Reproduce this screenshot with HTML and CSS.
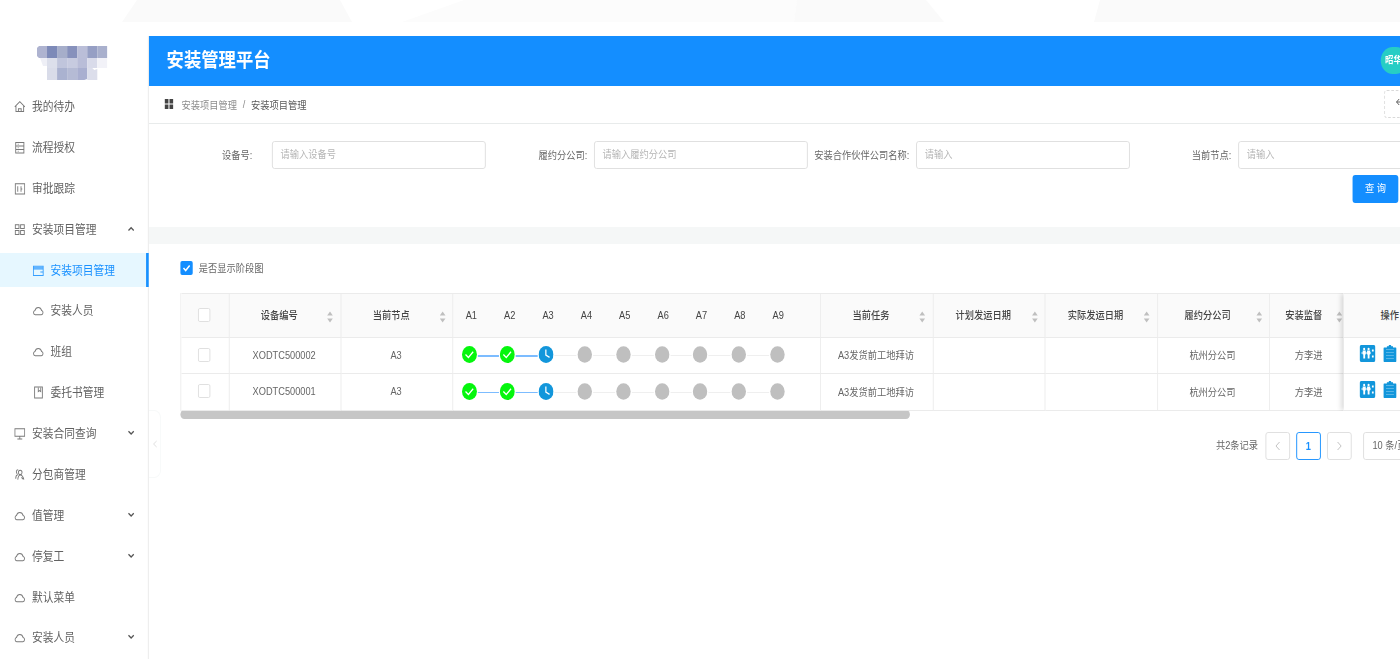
FILE: index.html
```html
<!DOCTYPE html>
<html lang="zh-CN">
<head>
<meta charset="utf-8">
<title>安装管理平台</title>
<link rel="stylesheet" href="styles.css">
</head>
<body>
<svg class="backdrop" width="1400" height="22" viewBox="0 0 1400 22">
  <path fill="#fafafa" d="M137 0H340L352 22H122z"/>
  <path fill="#fcfcfc" d="M464 0H797L794 22H402z"/>
  <path fill="#fafafa" d="M797 0H926L944 22H794z"/>
  <path fill="#fafafa" d="M1100 0H1400V22H1094z"/>
</svg>
<svg class="defs" width="0" height="0">
  <symbol id="cloud" viewBox="0 0 14 14"><path d="M3.200 11.500a2.300 2.300 0 0 1-.3-4.500C3.500 5 5 3.800 7 3.800S10.500 5 11.100 7a2.300 2.300 0 0 1-.3 4.500z"/></symbol>
  <symbol id="home" viewBox="0 0 14 14"><path d="M.8 7.500 7 1.800l6.200 5.700M2.300 6.500v6h9.400v-6M5.300 12.500V9.500h3.400v3"/></symbol>
  <symbol id="doc" viewBox="0 0 14 14"><path d="M2 1.500h10v11.500H2zM2 5.300h10M2 9.200h10M4.500 3.400h1M4.500 7.200h1M4.500 11h1"/></symbol>
  <symbol id="audit" viewBox="0 0 14 14"><path d="M1.500 2h11.500v11H1.500zM4.500 4.500v6M8.500 4.500v6M8.500 7.500h1.500"/></symbol>
  <symbol id="grid" viewBox="0 0 14 14"><path d="M1.500 2H6v4H1.500zM8 2h4.500v4H8zM1.500 8H6v4.500H1.500zM8 8h4.500v4.500H8z"/></symbol>
  <symbol id="window" viewBox="0 0 14 14"><path d="M1 2.500h12v10H1zM1 4h12M1 5.500h12M9.500 8.500H13"/></symbol>
  <symbol id="book" viewBox="0 0 14 14"><path d="M2.500 1h9.500v12H2.500zM7 2v4l1.500-1L10 6V2"/></symbol>
  <symbol id="screen" viewBox="0 0 14 14"><path d="M1 2h12v8H1zM4 12.800h6M7 10v2.500"/></symbol>
  <symbol id="people" viewBox="0 0 14 14"><path d="M5 2a2.200 2.200 0 0 0-1 4.200M2 11.500C2 9 3 7.500 4.500 7M7.500 2.500a2.200 2.200 0 1 1 0 4.500 2.200 2.200 0 0 1 0-4.500zM4.500 12.500C5 9 6 7.500 7.500 7.500S11 9 12 12.500M9 10l2 2"/></symbol>
  <symbol id="down" viewBox="0 0 8 6"><path d="M1 1.200 4 4l3-2.800"/></symbol>
  <symbol id="up" viewBox="0 0 8 6"><path d="M1 4.500 4 1.700l3 2.800"/></symbol>
  <symbol id="sort" viewBox="0 0 8 12"><path fill="#bfbfbf" d="M4 .5 7.200 4.500H.8zM4 11.500 7.200 7.500H.8z"/></symbol>
  <symbol id="done" viewBox="0 0 17 17"><circle cx="8.500" cy="8.500" r="8.500" fill="#05f60d"/><path d="m4 8.500 3.300 3 5.400-5.700" fill="none" stroke="#fff" stroke-width="1.500"/></symbol>
  <symbol id="clock" viewBox="0 0 17 17"><circle cx="8.500" cy="8.500" r="8.500" fill="#1296db"/><path d="M8.300 3.500v5.700l4.200 2.200" fill="none" stroke="#fff" stroke-width="1.400"/></symbol>
  <symbol id="todo" viewBox="0 0 17 17"><circle cx="8.500" cy="8.500" r="8.200" fill="#bfbfbf"/></symbol>
  <symbol id="team" viewBox="0 0 18 17"><rect width="18" height="17" rx="2" fill="#1296db"/><path fill="#fff" d="M3.500 5.500h3.500v4H6.300v4H4.200v-4h-.7zM8.500 5.500H12v4h-.7v4H9.200v-4h-.7zM2 7.500h11v1H2zM14 4.500h2v2h-2zM14 10.500h2v2h-2z"/><circle cx="5.200" cy="4" r="1.200" fill="#fff"/><circle cx="10.200" cy="4" r="1.200" fill="#fff"/></symbol>
  <symbol id="clip" viewBox="0 0 15 17"><path fill="#1296db" d="M1 2.500h3V1.300h2A1.500 1.500 0 0 1 9 1.300h2v1.200h3a1 1 0 0 1 1 1V16a1 1 0 0 1-1 1H1a1 1 0 0 1-1-1V3.500a1 1 0 0 1 1-1z"/><path d="M3 4.500h9M3 7.500h9M3 10.500h9M3 13.500h9" stroke="#6fbfea" stroke-width=".8"/></symbol>
</svg>
<div class="app">
  <aside class="side">
    <div class="logo">
      <svg width="80" height="34" viewBox="0 0 70 34" preserveAspectRatio="none">
        <path fill="#aeb3d0" d="M2 0h8v12H2L0 10V2z"/><path fill="#7d8ab8" d="M10 0h10v12H10z"/><path fill="#a6aeca" d="M20 0h10v12H20z"/><path fill="#8791bc" d="M30 0h10v12H30z"/><path fill="#babed8" d="M40 0h10v12H40z"/><path fill="#969fc4" d="M50 0h10v12H50z"/><path fill="#a9b0cd" d="M60 0h10v12H60z"/>
        <path fill="#eeeff6" d="M3 12h7v8H6z"/><path fill="#dcdfeb" d="M10 12h10v10H10z"/><path fill="#c0c5dc" d="M20 12h10v10H20z"/><path fill="#c7cbe0" d="M30 12h10v10H30z"/><path fill="#b9bdd8" d="M40 12h10v10H40z"/><path fill="#d9dbea" d="M50 12h10v10H50z"/><path fill="#f2f2f8" d="M60 12h10v10H60z"/>
        <path fill="#d9dce9" d="M10 22h10v12H10z"/><path fill="#aab2d0" d="M20 22h10v12H20z"/><path fill="#b5bbd5" d="M30 22h10v12H30z"/><path fill="#a9afd0" d="M40 22h10v11l-3 1h-7z"/><path fill="#dcdeeb" d="M50 22h5l2 2 3-1v11H50z"/>
      </svg>
    </div>
    <nav class="menu">
      <div class="item"><svg class="ico"><use href="#home"/></svg><span>我的待办</span></div>
      <div class="item"><svg class="ico"><use href="#doc"/></svg><span>流程授权</span></div>
      <div class="item"><svg class="ico"><use href="#audit"/></svg><span>审批跟踪</span></div>
      <div class="item"><svg class="ico"><use href="#grid"/></svg><span>安装项目管理</span><svg class="arrow"><use href="#up"/></svg></div>
      <div class="item sub active"><svg class="ico"><use href="#window"/></svg><span>安装项目管理</span></div>
      <div class="item sub"><svg class="ico"><use href="#cloud"/></svg><span>安装人员</span></div>
      <div class="item sub"><svg class="ico"><use href="#cloud"/></svg><span>班组</span></div>
      <div class="item sub"><svg class="ico"><use href="#book"/></svg><span>委托书管理</span></div>
      <div class="item"><svg class="ico"><use href="#screen"/></svg><span>安装合同查询</span><svg class="arrow"><use href="#down"/></svg></div>
      <div class="item"><svg class="ico"><use href="#people"/></svg><span>分包商管理</span></div>
      <div class="item"><svg class="ico"><use href="#cloud"/></svg><span>值管理</span><svg class="arrow"><use href="#down"/></svg></div>
      <div class="item"><svg class="ico"><use href="#cloud"/></svg><span>停复工</span><svg class="arrow"><use href="#down"/></svg></div>
      <div class="item"><svg class="ico"><use href="#cloud"/></svg><span>默认菜单</span></div>
      <div class="item"><svg class="ico"><use href="#cloud"/></svg><span>安装人员</span><svg class="arrow"><use href="#down"/></svg></div>
    </nav>
    <div class="collapse"><svg width="6" height="8" viewBox="0 0 6 8"><path d="M5 1 1.500 4 5 7" fill="none" stroke="#ddd"/></svg></div>
  </aside>
  <main class="main">
    <header class="top"><h1>安装管理平台</h1><div class="avatar">昭华</div></header>
    <div class="crumbs">
      <svg width="10" height="10" viewBox="0 0 10 10"><path fill="#444" d="M0 0h4.400v4.500H0zM5.600 0H10v4.500H5.600zM0 5.500h4.400V10H0zM5.600 5.500H10V10H5.600z"/></svg>
      <span class="prev">安装项目管理</span><span class="slash">/</span><span>安装项目管理</span>
      <div class="back"><svg width="12" height="12" viewBox="0 0 12 12"><path d="M4 1 1 4l3 3M1 4h6a3 3 0 0 1 0 6H5" fill="none" stroke="#555"/></svg></div>
    </div>
    <section class="search">
      <div class="fields">
        <label class="field"><span class="label wide">设备号:</span><span class="input">请输入设备号</span></label>
        <label class="field"><span class="label">履约分公司:</span><span class="input">请输入履约分公司</span></label>
        <label class="field"><span class="label">安装合作伙伴公司名称:</span><span class="input">请输入</span></label>
        <label class="field"><span class="label">当前节点:</span><span class="input">请输入</span></label>
      </div>
      <div class="actions"><span class="query">查 询</span></div>
    </section>
    <section class="list">
      <div class="toggle"><span class="check on"><svg width="14" height="14" viewBox="0 0 14 14"><path d="m3.500 7 2.500 2.600L10.500 4.500" fill="none" stroke="#fff" stroke-width="1.700"/></svg></span><span>是否显示阶段图</span></div>
      <div class="table">
        <div class="scroll">
          <div class="row head">
            <div class="cell"><span class="check"></span></div>
            <div class="cell sortable">设备编号<svg class="sort"><use href="#sort"/></svg></div>
            <div class="cell sortable">当前节点<svg class="sort"><use href="#sort"/></svg></div>
            <div class="cell stages"><span>A1</span><span>A2</span><span>A3</span><span>A4</span><span>A5</span><span>A6</span><span>A7</span><span>A8</span><span>A9</span></div>
            <div class="cell sortable">当前任务<svg class="sort"><use href="#sort"/></svg></div>
            <div class="cell sortable">计划发运日期<svg class="sort"><use href="#sort"/></svg></div>
            <div class="cell sortable">实际发运日期<svg class="sort"><use href="#sort"/></svg></div>
            <div class="cell sortable">履约分公司<svg class="sort"><use href="#sort"/></svg></div>
            <div class="cell sortable">安装监督<svg class="sort"><use href="#sort"/></svg></div>
          </div>
          <div class="row">
            <div class="cell"><span class="check"></span></div>
            <div class="cell">XODTC500002</div>
            <div class="cell">A3</div>
            <div class="cell steps"><svg><use href="#done"/></svg><i class="past"></i><svg><use href="#done"/></svg><i class="past"></i><svg><use href="#clock"/></svg><i></i><svg><use href="#todo"/></svg><i></i><svg><use href="#todo"/></svg><i></i><svg><use href="#todo"/></svg><i></i><svg><use href="#todo"/></svg><i></i><svg><use href="#todo"/></svg><i></i><svg><use href="#todo"/></svg></div>
            <div class="cell">A3发货前工地拜访</div>
            <div class="cell"></div>
            <div class="cell"></div>
            <div class="cell">杭州分公司</div>
            <div class="cell">方李进</div>
          </div>
          <div class="row">
            <div class="cell"><span class="check"></span></div>
            <div class="cell">XODTC500001</div>
            <div class="cell">A3</div>
            <div class="cell steps"><svg><use href="#done"/></svg><i class="past"></i><svg><use href="#done"/></svg><i class="past"></i><svg><use href="#clock"/></svg><i></i><svg><use href="#todo"/></svg><i></i><svg><use href="#todo"/></svg><i></i><svg><use href="#todo"/></svg><i></i><svg><use href="#todo"/></svg><i></i><svg><use href="#todo"/></svg><i></i><svg><use href="#todo"/></svg></div>
            <div class="cell">A3发货前工地拜访</div>
            <div class="cell"></div>
            <div class="cell"></div>
            <div class="cell">杭州分公司</div>
            <div class="cell">方李进</div>
          </div>
        </div>
        <div class="fixed">
          <div class="op head">操作</div>
          <div class="op"><svg width="18" height="17"><use href="#team"/></svg><svg width="15" height="17"><use href="#clip"/></svg></div>
          <div class="op"><svg width="18" height="17"><use href="#team"/></svg><svg width="15" height="17"><use href="#clip"/></svg></div>
        </div>
      </div>
      <div class="bar"></div>
      <div class="pager">
        <span class="total">共2条记录</span>
        <span class="page"><svg width="8" height="10" viewBox="0 0 8 10"><path d="M6 1 2 5l4 4"/></svg></span>
        <span class="page current">1</span>
        <span class="page"><svg width="8" height="10" viewBox="0 0 8 10"><path d="m2 1 4 4-4 4"/></svg></span>
        <span class="size">10 条/页</span>
      </div>
    </section>
  </main>
</div>
</body>
</html>
```
FILE: styles.css
```css
* { box-sizing: border-box; }
html { overflow: hidden; }
body {
  margin: 0;
  width: 1400px;
  height: 659px;
  overflow: hidden;
  background: #fff;
  font-family: "Liberation Sans", "Noto Sans CJK SC", sans-serif;
  font-size: 10.5px;
  color: #666;
}
.backdrop { display: block; }
.defs { position: absolute; }

.app {
  display: flex;
  width: 1591px;
  height: 637px;
  padding-top: 14px;
  transform: scaleX(.88);
  transform-origin: 0 0;
}

.side {
  position: relative;
  flex: none;
  width: 169.300px;
  border-right: 1px solid #e8e8e8;
}
.logo { height: 53.500px; padding: 10px 0 0 42px; }
.menu { display: flex; flex-direction: column; gap: 6.880px; }
.item {
  display: flex;
  flex: none;
  align-items: center;
  height: 34px;
  padding: 0 15px 1px 15.500px;
  font-size: 12.200px;
  color: #626262;
  white-space: nowrap;
}
.item.sub { padding-left: 36.500px; }
.item.active { margin-right: -1px; background: #e6f7ff; border-right: 3px solid #1890ff; color: #1890ff; }
.ico { width: 13px; height: 13px; margin: 1px 8px 0 0; fill: none; stroke: currentColor; stroke-width: 1.100; opacity: .85; }
.arrow { width: 8px; height: 6px; margin-left: auto; fill: none; stroke: #555; stroke-width: 1.500; }
.collapse {
  position: absolute;
  top: 374px;
  left: 169px;
  display: flex;
  align-items: center;
  justify-content: center;
  width: 14px;
  height: 68px;
  border: 1px solid #f7f9f9;
  border-left: 0;
  border-radius: 0 8px 8px 0;
}

.main { flex: 1; min-width: 0; overflow: hidden; }
.top {
  display: flex;
  align-items: center;
  justify-content: space-between;
  height: 50px;
  padding: 0 0 2px 20px;
  background: #148eff;
  color: #fff;
}
.top h1 { margin: 0; font-size: 19.700px; line-height: 28px; }
.avatar {
  flex: none;
  width: 31px;
  height: 27px;
  margin-right: -9px;
  padding-left: 5px;
  border-radius: 14px;
  background: #26cdc5;
  font-size: 9.500px;
  font-weight: bold;
  line-height: 26px;
  white-space: nowrap;
}
.crumbs {
  display: flex;
  align-items: center;
  height: 38px;
  padding: 0 0 1px 18px;
  border-bottom: 1px solid #e8ebeb;
  color: #595959;
}
.crumbs .prev { margin-left: 9px; color: #8c8c8c; }
.crumbs .slash { margin: 0 6.500px; color: #8c8c8c; }
.back {
  display: flex;
  align-items: center;
  width: 38px;
  height: 28px;
  margin: 0 -20px 0 auto;
  padding-left: 12px;
  border: 1px dashed #d9d9d9;
  border-radius: 3px;
}
.search { height: 102.500px; padding-top: 17px; }
.fields { display: flex; padding-left: 17px; }
.field { display: flex; flex: none; align-items: center; width: 366px; }
.label { width: 122.500px; padding: 0 7.500px 2px 0; text-align: right; white-space: nowrap; }
.label.wide { padding-right: 22px; }
.input {
  width: 243.500px;
  height: 28px;
  padding-left: 9px;
  border: 1px solid #dedede;
  border-radius: 3px;
  line-height: 25px;
  color: #b5b5b5;
}
.actions { display: flex; justify-content: flex-end; padding: 6px 2px 0 0; }
.query {
  width: 52px;
  height: 28px;
  border-radius: 3px;
  background: #148eff;
  color: #fff;
  line-height: 27px;
  text-align: center;
}

.list { padding: 17px 0 0 35.500px; border-top: 17px solid #f5f7f7; }
.toggle { display: flex; align-items: center; gap: 7px; height: 15px; white-space: nowrap; }
.toggle span:last-child { padding-bottom: 2px; }
.check {
  display: block;
  width: 14px;
  height: 14px;
  border: 1px solid #dedede;
  border-radius: 2px;
  background: #fff;
}
.check.on { border: 0; background: #148eff; }
.table { display: flex; margin-top: 17.500px; }
.scroll { flex: none; width: 1322.500px; overflow: hidden; border-left: 1px solid #ebebeb; }
.row {
  display: grid;
  grid-template-columns: 55px 127.200px 127.200px 418px 127.400px 127.500px 127.500px 127.500px 91px;
  height: 36.500px;
}
.row.head { height: 44.500px; border-top: 1px solid #ebebeb; background: #fafafa; color: #444; }
.cell {
  display: flex;
  align-items: center;
  justify-content: center;
  padding: 0 2px 1px 0;
  border-right: 1px solid #ebebeb;
  border-bottom: 1px solid #ebebeb;
  white-space: nowrap;
}
.sortable { position: relative; padding: 0 13px 2px 0; font-weight: 500; }
.sort { position: absolute; right: 7.500px; top: 17px; width: 8px; height: 12px; }
.stages { justify-content: flex-start; padding-left: 14px; }
.stages span { width: 43.600px; }
.steps { justify-content: flex-start; padding-left: 9.500px; }
.steps svg { flex: none; width: 17px; height: 17px; }
.steps i { width: 24.800px; height: 1px; margin: 2px 1px 0; background: #efefef; }
.steps i.past { height: 1.500px; background: #7cbcff; }
.fixed {
  z-index: 1;
  flex: none;
  width: 90px;
  background: #fff;
  box-shadow: -4px 0 5px -1px rgba(0, 0, 0, .14);
  clip-path: inset(0 0 0 -10px);
}
.op {
  display: flex;
  align-items: center;
  gap: 9px;
  height: 36.500px;
  padding: 0 0 4px 17.500px;
  border-bottom: 1px solid #ebebeb;
}
.op.head { height: 44.500px; padding: 0 0 2px 41.500px; border-top: 1px solid #ebebeb; background: #fafafa; color: #444; font-weight: 500; }
.bar { width: 829px; height: 9px; margin-top: -1px; border-radius: 5px; background: #c6c6c6; }
.pager { display: flex; align-items: center; height: 28px; margin: 13px 0 0 1177px; white-space: nowrap; }
.total { padding-bottom: 2px; }
.page {
  display: flex;
  flex: none;
  align-items: center;
  justify-content: center;
  width: 28px;
  height: 28px;
  margin-left: 7px;
  border: 1px solid #dedede;
  border-radius: 3px;
}
.total + .page { margin-left: 8px; }
.page path { fill: none; stroke: #bfbfbf; }
.page.current { border-color: #1890ff; color: #1890ff; font-weight: bold; }
.size { flex: none; width: 90px; height: 28px; margin-left: 13px; padding-left: 10px; border: 1px solid #dedede; border-radius: 3px; line-height: 25px; }
```
